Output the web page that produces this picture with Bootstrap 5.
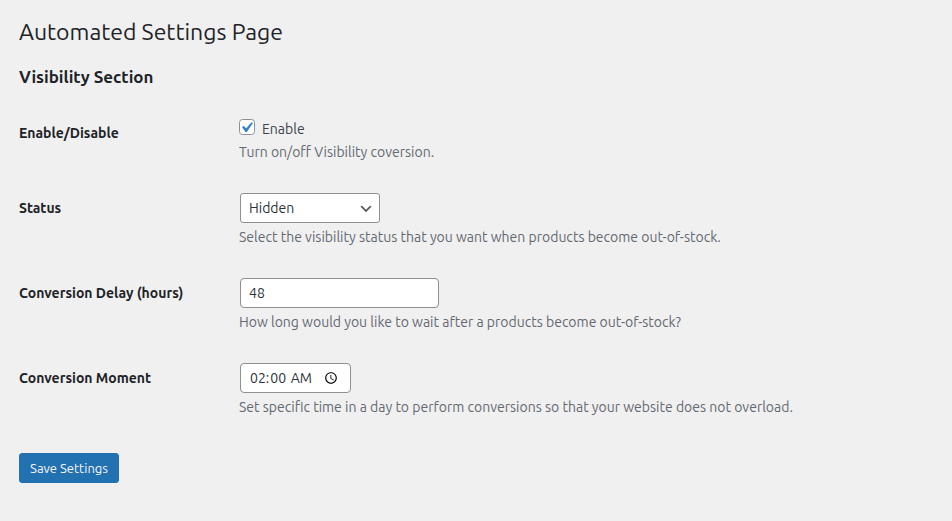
<!DOCTYPE html>
<html lang="en">
<head>
<meta charset="utf-8">
<meta name="viewport" content="width=device-width, initial-scale=1">
<title>Automated Settings Page</title>
<link href="https://cdn.jsdelivr.net/npm/bootstrap@5.3.0/dist/css/bootstrap.min.css" rel="stylesheet">
<style>
body{background:#f0f0f0;color:#3c434a;font:14px/20px Ubuntu,"Noto Sans","Open Sans",sans-serif}
.settings-page{padding:17px 19px}
.page-title{font-size:23px;line-height:30px;font-weight:400;color:#1d2327}
.section-title{font-size:16.9px;line-height:24px;font-weight:600;color:#1d2327;margin-top:18px}
.settings-form{padding-top:29px}
.setting{display:grid;grid-template-columns:220px 1fr;height:85px}
.setting.short{height:75px}
.setting-name{font-weight:600;color:#1d2327;padding-top:5px}
.enable{padding-top:1px}
.hint{color:#646970;margin-top:4px}
.enable + .hint{margin-top:3px}
.wp-field{height:30px;margin-left:1px;border:1px solid #8c8f94;border-radius:4px;color:#2c3338;font-size:14px;line-height:20px;padding:0 8px;background-color:#fff}
select.wp-field{width:140px;border-radius:3px;background-image:url("data:image/svg+xml,%3Csvg xmlns='http://www.w3.org/2000/svg' viewBox='0 0 20 20'%3E%3Cpath d='M5 6l5 5 5-5 2 1-7 7-7-7 2-1z' fill='%23555'/%3E%3C/svg%3E");background-size:16px 16px;background-position:right 5px top 55%}
.delay{width:199px}
.moment{width:111px}
.moment::-webkit-datetime-edit-hour-field{padding-left:1px}
.moment::-webkit-datetime-edit-ampm-field{margin-left:1px}
.tick{width:16px;height:16px;margin:0 7px 0 0;border:1px solid #8c8f94;border-radius:4px;background-color:#fff}
.tick:checked{background-color:#fff;border-color:#8c8f94;background-size:21px 21px;background-position:-4px -3px;background-image:url("data:image/svg+xml,%3Csvg xmlns='http://www.w3.org/2000/svg' viewBox='0 0 20 20'%3E%3Cpath d='M14.83 4.89l1.34.94-5.81 8.38H9.02L5.78 9.67l1.34-1.25 2.57 2.4z' fill='%233582c4'/%3E%3C/svg%3E")!important}
.save{width:100px;height:30px;margin-top:5px;border-radius:3px;background:#2271b1;border-color:#2271b1;color:#f6f7f7;font-size:13px;line-height:28px}
</style>
</head>
<body>
<main class="settings-page">
<h1 class="page-title mb-0">Automated Settings Page</h1>
<h2 class="section-title mb-0">Visibility Section</h2>
<form class="settings-form">
<div class="setting short">
<div class="setting-name">Enable/Disable</div>
<div><label class="enable d-flex"><input type="checkbox" class="form-check-input tick" checked><span>Enable</span></label><div class="hint">Turn on/off Visibility coversion.</div></div>
</div>
<div class="setting">
<label class="setting-name" for="status">Status</label>
<div><select id="status" class="form-select wp-field"><option>Hidden</option></select><div class="hint">Select the visibility status that you want when products become out-of-stock.</div></div>
</div>
<div class="setting">
<label class="setting-name" for="delay">Conversion Delay (hours)</label>
<div><input id="delay" class="form-control wp-field delay" value="48"><div class="hint">How long would you like to wait after a products become out-of-stock?</div></div>
</div>
<div class="setting">
<label class="setting-name" for="moment">Conversion Moment</label>
<div><input id="moment" type="time" class="form-control wp-field moment" value="02:00"><div class="hint">Set specific time in a day to perform conversions so that your website does not overload.</div></div>
</div>
<button type="button" class="btn btn-primary p-0 save">Save Settings</button>
</form>
</main>
<script src="https://cdn.jsdelivr.net/npm/bootstrap@5.3.0/dist/js/bootstrap.bundle.min.js"></script>
</body>
</html>
